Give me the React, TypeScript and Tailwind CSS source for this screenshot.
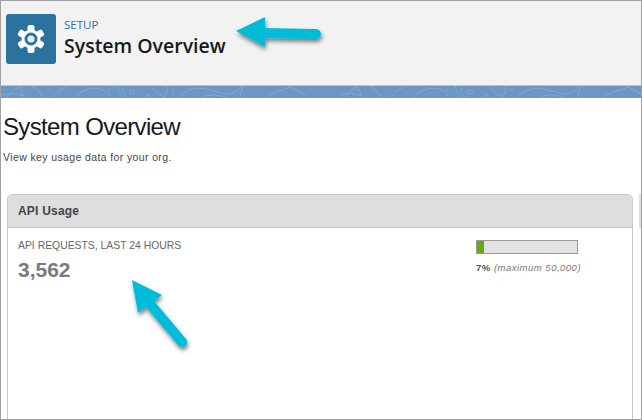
const GearIcon = () => (
  <svg width="28" height="30" viewBox="0 0 28 30" fill="none">
    <circle cx="14" cy="15" r="9.5" fill="#fff" />
    {[0, 60, 120, 180, 240, 300].map((deg) => (
      <rect
        key={deg}
        x="10.5"
        y="1"
        width="7"
        height="7"
        rx="2"
        fill="#fff"
        transform={`rotate(${deg} 14 15)`}
      />
    ))}
    <circle cx="14" cy="15" r="6.5" fill="#2a739e" />
    <circle cx="14" cy="15" r="3.6" fill="#e4edf3" />
  </svg>
);

const Band = () => (
  <svg className="block h-3 w-full" height="12">
    <defs>
      <pattern id="swirl" width="338" height="12" patternUnits="userSpaceOnUse">
        <g stroke="#88abd3" strokeWidth="0.8" fill="none">
          <path d="M6 11C10 6 16 1 19 1C20 5 22 8 23 12" />
          <path d="M0 9Q12 6 23 10" />
          <path d="M30 0Q38 3 42 12" />
          <path d="M52 11L54 8M57 5L65 1" />
          <path d="M75 12C80 3 92 1 100 3C104 4 106 6 109 10" />
          <path d="M108 2L108 7" />
          <path d="M116 0C117 4 119 9 122 12" />
          <path d="M123 1C121 5 122 10 127 11" />
          <circle cx="131" cy="6" r="2.4" />
          <circle cx="147" cy="11" r="2" />
          <path d="M150 0C153 5 158 8 163 11" />
          <path d="M165 0C168 4 165 9 162 12" />
          <path d="M172 5L174 1M171 10L172 9" />
          <path d="M177 12C185 3 195 1 205 3C215 5 225 10 232 7C236 5 238 3 240 0" />
          <path d="M200 12C208 7 220 9 226 12" />
          <path d="M241 1L239 12" />
          <path d="M264 12C270 6 280 5 290 1L305 10" />
        </g>
      </pattern>
    </defs>
    <rect width="100%" height="12" fill="#6b96c5" />
    <rect width="100%" height="12" fill="url(#swirl)" />
  </svg>
);

const Arrow = ({ className, points, x1, y1, x2, y2 }: { className: string; points: string; x1: number; y1: number; x2: number; y2: number }) => (
  <svg className={className} width="642" height="420" viewBox="0 0 642 420" fill="none">
    <defs>
      <filter id="arrow-shadow" x="-20%" y="-20%" width="140%" height="140%">
        <feDropShadow dx="1" dy="3" stdDeviation="2" floodColor="#000" floodOpacity="0.5" />
      </filter>
    </defs>
    <g filter="url(#arrow-shadow)">
      <line x1={x1} y1={y1} x2={x2} y2={y2} stroke="#00bcd9" strokeWidth="10" strokeLinecap="round" />
      <polygon points={points} fill="#00bcd9" />
    </g>
  </svg>
);

export default function App() {
  return (
    <div className="relative h-[420px] w-[642px] overflow-hidden border border-[#a0a0a0] bg-white font-['Liberation_Sans',sans-serif]">
      <header className="flex h-[85px] items-start gap-2 border-b border-[#c4c4c4] bg-[#f2f2f2] pl-[5px] pt-[13px]">
        <div className="flex h-[50px] w-[50px] items-center justify-center rounded-[3px] bg-[#2a739e]">
          <GearIcon />
        </div>
        <div className="font-['Open_Sans',sans-serif]">
          <div className="pt-[3px] text-[11.5px] leading-4 text-[#2a739e]">SETUP</div>
          <h2 className="text-[19.5px] font-semibold leading-[26px] text-[#16191f]">System Overview</h2>
        </div>
      </header>
      <Band />
      <main className="pl-[2px]">
        <h1 className="mt-[14px] text-[24px] leading-[30px] tracking-[-0.65px] text-[#16191f]">System Overview</h1>
        <p className="mt-[9px] text-[10.5px] leading-3 tracking-[0.38px] text-[#444]">View key usage data for your org.</p>
        <div className="ml-1 mt-[31px] flex gap-[6px]">
          <section className="h-[240px] w-[626px] shrink-0 rounded-t-[5px] border border-[#c8c8c8]">
            <h3 className="flex h-[33px] items-center rounded-t-[4px] border-b border-[#c8c8c8] bg-[#dedede] pl-[10px] text-[12px] font-bold tracking-[0.2px] text-[#444]">
              API Usage
            </h3>
            <div className="flex pl-[10px] pt-[12px]">
              <div className="w-[458px]">
                <div className="text-[10.4px] leading-[11px] text-[#666]">API REQUESTS, LAST 24 HOURS</div>
                <div className="mt-[7px] text-[21px] font-bold leading-6 text-[#7a7a80]">3,562</div>
              </div>
              <div>
                <div className="h-[14px] w-[102px] border border-[#999] bg-[#e2e2e2]">
                  <div className="h-full w-[7px] bg-[#6aa80f]" />
                </div>
                <div className="mt-[8px] text-[9.5px] leading-[11px] tracking-[0.5px] text-[#777]">
                  <b className="text-[#555]">7%</b> <i>(maximum 50,000)</i>
                </div>
              </div>
            </div>
          </section>
          <div className="h-[34px] w-4 shrink-0 bg-[#dedede]" />
        </div>
      </main>
      <Arrow className="absolute -left-px -top-px" points="236,31 265,17 265,47" x1={262} y1={33} x2={316} y2={34} />
      <Arrow className="absolute -left-px -top-px" points="132,280 162,295 138,313" x1={150} y1={304} x2={182} y2={342} />
    </div>
  );
}
